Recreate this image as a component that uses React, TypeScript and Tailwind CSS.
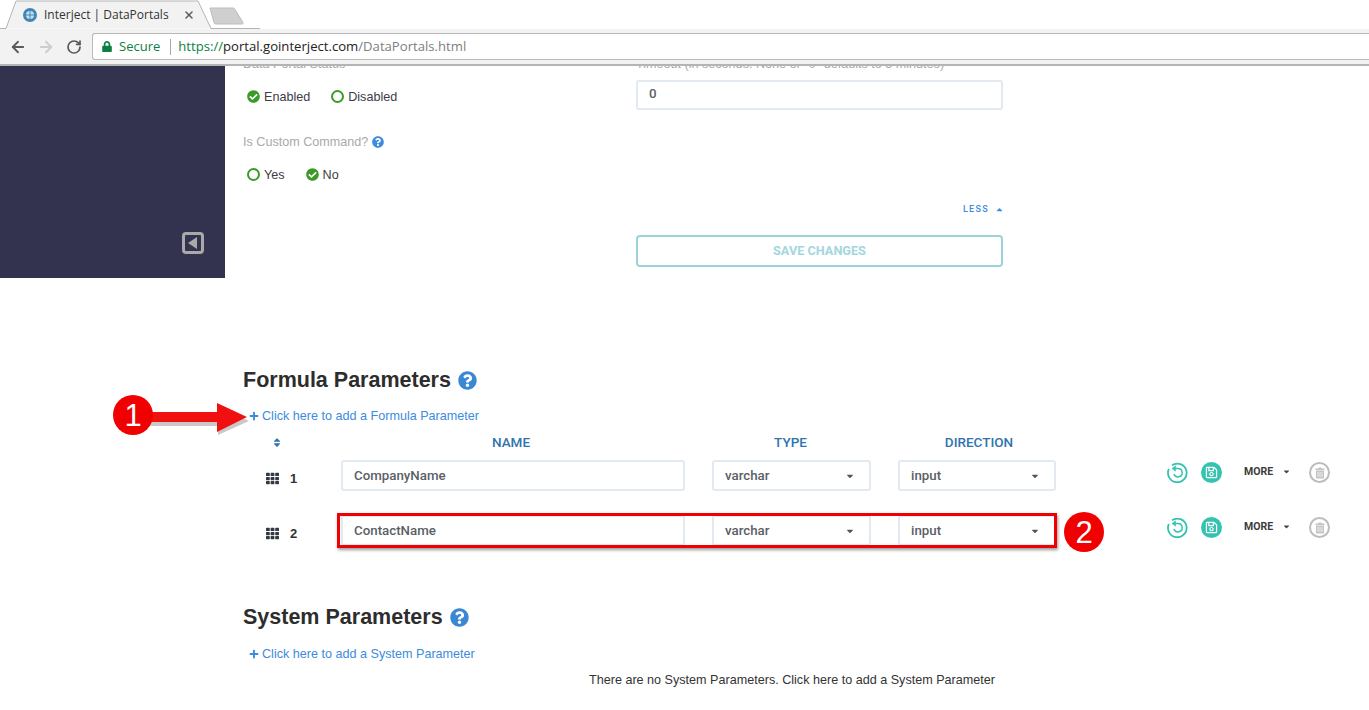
import { ArrowLeft, ArrowRight, RotateCw, X } from "lucide-react";
import { FaCheckCircle, FaLock, FaPlus, FaQuestionCircle, FaRegSave, FaSort, FaTh, FaCaretDown, FaCaretUp } from "react-icons/fa";

function Radio({ label, checked }: { label: string; checked?: boolean }) {
  return (
    <span className="flex items-center gap-[4px] text-[12.6px] leading-[16px] text-[#3c3c46]">
      {checked ? (
        <FaCheckCircle className="h-[13px] w-[13px] text-[#3d9a26]" />
      ) : (
        <span className="h-[13px] w-[13px] rounded-full border-2 border-[#3d9a26]" />
      )}
      <span className="translate-y-[0.5px]">{label}</span>
    </span>
  );
}

function SelectBox({ value, width }: { value: string; width: string }) {
  return (
    <div className={`flex h-[31px] items-center justify-between rounded-[3px] border-2 border-[#e3e9f0] pl-[11px] pr-[15px] font-['Roboto',sans-serif] text-[13.3px] font-medium text-[#5a5f66] ${width}`}>
      <span>{value}</span>
      <FaCaretDown className="h-[10px] w-[8px] text-[#555]" />
    </div>
  );
}

function ParamRow({ index, name }: { index: number; name: string }) {
  return (
    <div className="flex h-[31px] items-center">
      <FaTh className="ml-[23px] mt-[5px] h-[13px] w-[13px] text-[#333a44]" />
      <span className="ml-[11px] mt-[6px] w-[51px] text-[13px] font-bold leading-none text-[#333]">{index}</span>
      <div className="flex h-[31px] w-[344px] items-center rounded-[3px] border-2 border-[#e3e9f0] pl-[11px] font-['Roboto',sans-serif] text-[13.3px] font-medium text-[#5a5f66]">
        <span>{name}</span>
      </div>
      <SelectBox value="varchar" width="ml-[27px] w-[159px]" />
      <SelectBox value="input" width="ml-[27px] w-[158px]" />
      <div className="ml-[111px] flex -translate-y-[3px] items-center">
        <svg viewBox="0 0 21 21" className="h-[21px] w-[21px]" fill="none" stroke="#35c3b1">
          <path d="M5 3.300 A9.300 9.300 0 1 1 1.900 7" strokeWidth="1.800" />
          <path d="M7.500 6.500 H11 a4.200 4.200 0 1 1 -4 5.500" strokeWidth="1.500" />
          <path d="M8.500 3.800 L5 6.500 L8.500 9.200 Z" fill="#35c3b1" strokeWidth="0.500" />
        </svg>
        <div className="ml-[13px] flex h-[21px] w-[21px] items-center justify-center rounded-full bg-[#35c3b1]">
          <FaRegSave className="h-[13px] w-[13px] text-white" />
        </div>
        <span className="ml-[22px] -translate-y-[1px] font-['Roboto',sans-serif] text-[10.5px] font-bold text-[#3d3a3a]">MORE</span>
        <FaCaretDown className="ml-[10px] h-[9px] w-[7px] -translate-y-[1px] text-[#444]" />
        <div className="ml-[19px] flex h-[21px] w-[21px] items-center justify-center rounded-full border-2 border-[#bcbcbc]">
          <svg viewBox="0 0 10 12" className="h-[12px] w-[10px]">
            <path d="M3.500 0.500h3v1h3v1.500h-9v-1.500h3z" fill="#c4c4c4" />
            <path d="M1 3.500h8v8h-8z" fill="#c4c4c4" />
            <path d="M3 5v5M5 5v5M7 5v5" stroke="#fff" strokeWidth="0.700" />
          </svg>
        </div>
      </div>
    </div>
  );
}

function AddLink({ label }: { label: string }) {
  return (
    <div className="flex items-center text-[12.6px] leading-[16px] text-[#3d8bdc]">
      <FaPlus className="mr-[3px] h-[10px] w-[10px]" />
      {label}
    </div>
  );
}

function Marker({ n, className }: { n: number; className: string }) {
  return (
    <div className={`absolute flex h-[40px] w-[40px] items-center justify-center rounded-full bg-[#f00000] text-[31px] leading-none text-white ${className}`}>
      {n}
    </div>
  );
}

export default function App() {
  return (
    <div className="relative h-[710px] w-[1369px] overflow-hidden bg-white font-['Liberation_Sans',sans-serif]">
      {/* browser chrome */}
      <div className="relative h-[29px] bg-white">
        <svg className="absolute left-0 top-0 h-[29px] w-[260px]" viewBox="0 0 260 29" fill="none">
          <path d="M0 28.500H6L16 1H198L211 28.500H260" fill="#f2f2f2" stroke="#b4b4b4" />
          <path d="M210 8h23a2 2 0 0 1 2 1.500l8 13a1 1 0 0 1 -1 1.500H216a2 2 0 0 1 -2 -1.500z" fill="#cfcfcf" stroke="#bdbdbd" />
          <circle cx="30" cy="15" r="7" fill="#3f87b6" />
          <circle cx="30" cy="15" r="4" fill="#c9dfee" />
          <path d="M26 15h8M30 11v8" stroke="#3f87b6" />
        </svg>
        <span className="absolute left-[44px] top-[7px] font-['Open_Sans',sans-serif] text-[12px] leading-[16px] text-[#333]">Interject | DataPortals</span>
        <X className="absolute left-[183px] top-[9px] h-[12px] w-[12px] text-[#5a5a5a]" strokeWidth={3} />
      </div>
      <div className="flex h-[37px] items-center border-b-2 border-[#b4b4b4] bg-[#f2f2f2]">
        <ArrowLeft className="ml-[9px] h-[18px] w-[18px] text-[#5a5a5a]" strokeWidth={2.4} />
        <ArrowRight className="ml-[10px] h-[18px] w-[18px] text-[#cdcdcd]" strokeWidth={2.4} />
        <RotateCw className="ml-[11px] h-[16px] w-[16px] text-[#5a5a5a]" strokeWidth={2.6} />
        <div className="ml-[10px] flex h-[27px] flex-1 items-center rounded-l-[3px] border border-r-0 border-[#b9b9b9] bg-white pl-[9px] font-['Open_Sans',sans-serif] text-[13px]">
          <FaLock className="h-[11px] w-[10px] text-[#0b8043]" />
          <span className="ml-[7px] text-[#0b8043]">Secure</span>
          <span className="ml-[10px] h-[16px] w-px bg-[#a8a8a8]" />
          <span className="ml-[7px] text-[13.13px] text-[#0b8043]">https://</span>
          <span className="text-[13.13px] text-[#222]">portal.gointerject.com</span>
          <span className="text-[13.13px] text-[#808080]">/DataPortals.html</span>
        </div>
      </div>

      {/* form top */}
      <div className="flex h-[212px] overflow-hidden">
        <div className="relative w-[225px] shrink-0 bg-[#33334f]">
          <div className="absolute left-[182px] top-[166px] flex h-[22px] w-[22px] items-center justify-center rounded-[4px] border-[3px] border-[#a9a9a9]">
            <span className="mr-[1px] h-0 w-0 border-y-[6px] border-r-[9px] border-y-transparent border-r-[#a9a9a9]" />
          </div>
        </div>
        <div className="ml-[18px] w-[393px] shrink-0">
          <div className="-mt-[10px] text-[12.6px] leading-[16px] text-[#a9a9a9]">Data Portal Status</div>
          <div className="ml-[4px] mt-[16px] flex gap-[21px]">
            <Radio label="Enabled" checked />
            <Radio label="Disabled" />
          </div>
          <div className="mt-[30px] flex items-center gap-[4px] text-[12.6px] leading-[16px] text-[#a9a9a9]">
            Is Custom Command?
            <FaQuestionCircle className="h-[12px] w-[12px] text-[#3d8bdc]" />
          </div>
          <div className="ml-[4px] mt-[16px] flex gap-[21px]">
            <Radio label="Yes" />
            <Radio label="No" checked />
          </div>
        </div>
        <div className="w-[367px] shrink-0">
          <div className="-mt-[10px] whitespace-nowrap text-[12.6px] leading-[16px] text-[#a9a9a9]">Timeout (in seconds. None or "0" defaults to 5 minutes)</div>
          <div className="mt-[8px] flex h-[30px] items-center rounded-[3px] border-2 border-[#e3e9f0] pl-[11px] font-['Roboto',sans-serif] text-[13.3px] font-medium text-[#5a5f66]">
            <span className="-mt-[2px]">0</span>
          </div>
          <div className="mt-[93px] flex items-center justify-end font-['Roboto',sans-serif] text-[9px] font-medium tracking-[1.3px] text-[#3d8bdc]">
            LESS
            <FaCaretUp className="ml-[7px] h-[9px] w-[7px]" />
          </div>
          <div className="mt-[18px] flex h-[32px] items-center justify-center rounded-[4px] border-2 border-[#9ad3d9] pt-[1px] font-['Roboto',sans-serif] text-[12.7px] font-bold text-[#a3d6de]">
            SAVE CHANGES
          </div>
        </div>
      </div>

      {/* formula parameters */}
      <div className="ml-[243px] mt-[90px]">
        <h2 className="flex items-center text-[21.5px] font-bold leading-[24px] text-[#2d2d2d]">
          Formula Parameters
          <FaQuestionCircle className="ml-[7px] h-[19px] w-[19px] text-[#3a87d3]" />
        </h2>
        <div className="ml-[6px] mt-[16px]">
          <AddLink label="Click here to add a Formula Parameter" />
        </div>
        <div className="mt-[10px] flex h-[16px] items-center font-['Roboto',sans-serif] text-[13.5px] font-medium text-[#2f74ae]">
          <FaSort className="ml-[29px] h-[11px] w-[10px] text-[#2f74ae]" />
          <span className="ml-[57px] w-[344px] text-center">NAME</span>
          <span className="ml-[28px] w-[159px] text-center">TYPE</span>
          <span className="ml-[30px] w-[158px] text-center">DIRECTION</span>
        </div>
        <div className="mt-[10px] flex flex-col gap-[24px]">
          <ParamRow index={1} name="CompanyName" />
          <ParamRow index={2} name="ContactName" />
        </div>

        {/* system parameters */}
        <h2 className="mt-[59px] flex items-center text-[21.5px] font-bold leading-[24px] text-[#2d2d2d]">
          System Parameters
          <FaQuestionCircle className="ml-[7px] h-[19px] w-[19px] text-[#3a87d3]" />
        </h2>
        <div className="ml-[6px] mt-[17px]">
          <AddLink label="Click here to add a System Parameter" />
        </div>
        <div className="ml-[346px] mt-[10px] text-[12.6px] leading-[16px] text-[#333]">
          There are no System Parameters. Click here to add a System Parameter
        </div>
      </div>

      {/* annotations */}
      <svg className="absolute left-[140px] top-[395px] h-[45px] w-[115px]" viewBox="0 0 115 45">
        <path d="M0 19H77V10L108 24L77 38V29H0Z" fill="#888" opacity="0.45" transform="translate(1 2)" />
        <path d="M0 17H77V8L107 22L77 37V27H0Z" fill="#f01010" />
      </svg>
      <Marker n={1} className="left-[113px] top-[395px]" />
      <div className="absolute left-[337px] top-[513px] h-[35px] w-[720px] border-[3px] border-[#f00000] shadow-[1px_2px_3px_rgba(0,0,0,0.4)]" />
      <Marker n={2} className="left-[1064px] top-[512px]" />
    </div>
  );
}
